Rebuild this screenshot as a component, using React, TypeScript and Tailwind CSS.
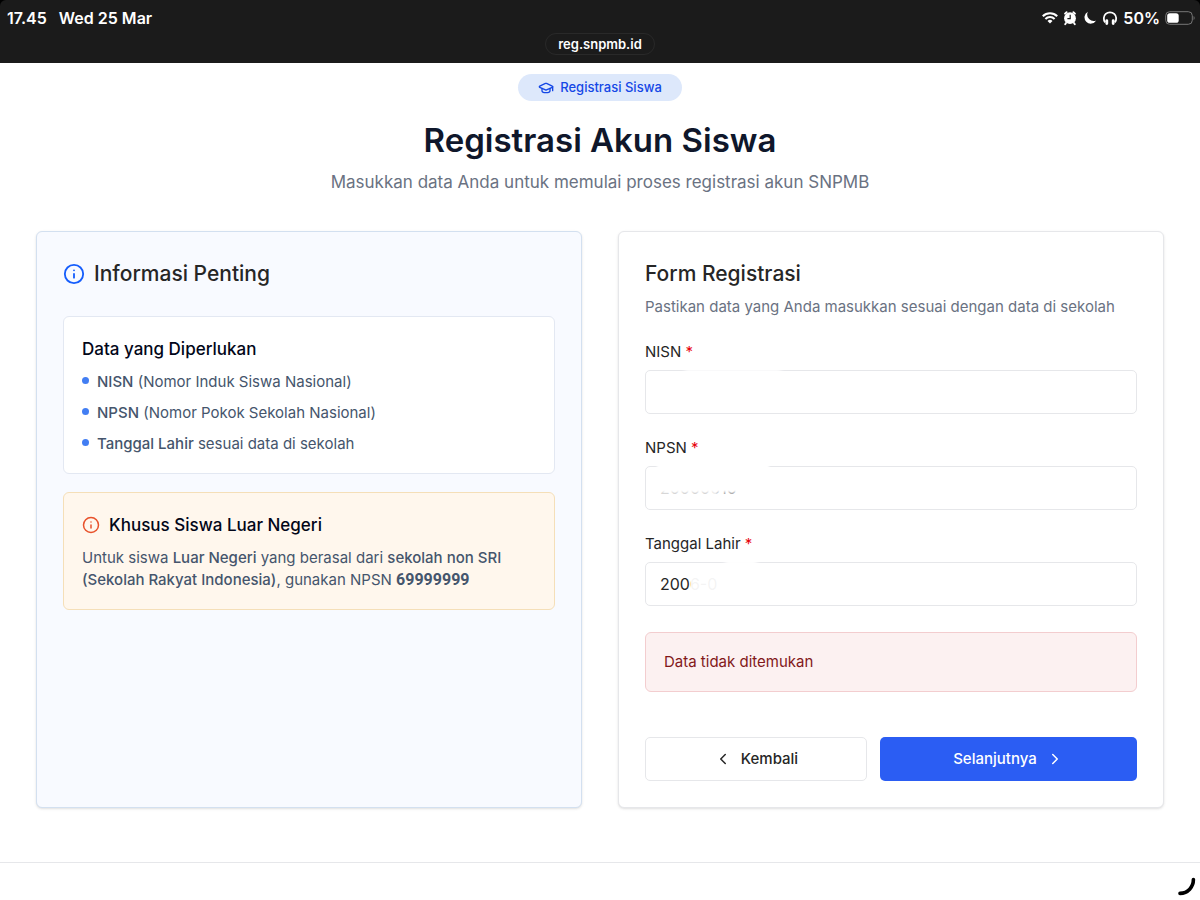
import { ReactNode } from "react";
import { ChevronLeft, ChevronRight, GraduationCap, Info } from "lucide-react";

const requirements = [
  { name: "NISN", detail: "(Nomor Induk Siswa Nasional)" },
  { name: "NPSN", detail: "(Nomor Pokok Sekolah Nasional)" },
  { name: "Tanggal Lahir", detail: "sesuai data di sekolah" },
];

const StatusIcons = () => (
  <div className="flex items-center gap-1">
    <svg className="w-4 h-4" viewBox="0 0 16 16" fill="none" stroke="currentColor" strokeWidth="2.1">
      <path d="M0.8 6.2a10.2 10.2 0 0 1 14.4 0" />
      <path d="M3.4 8.9a6.5 6.5 0 0 1 9.2 0" />
      <path d="M8 13.6 5.5 11a3.5 3.5 0 0 1 5 0z" fill="currentColor" stroke="none" />
    </svg>
    <svg className="w-4 h-4" viewBox="0 0 14 16">
      <circle cx="7" cy="8.2" r="5.9" fill="currentColor" />
      <path
        d="M2 3.6 3.6 2.2M12 3.6 10.4 2.2M3 13l-.8 1.2M11 13l.8 1.2"
        stroke="currentColor"
        strokeWidth="1.9"
        strokeLinecap="round"
      />
      <path d="M7.2 4.8v3.8H4.4" fill="none" stroke="#1b1b1b" strokeWidth="1.2" />
    </svg>
    <svg className="w-4 h-4" viewBox="0 0 14 16" fill="currentColor">
      <path d="M4.8 1.8A6.3 6.3 0 1 0 13.2 10.6 6.6 6.6 0 0 1 4.8 1.8z" />
    </svg>
    <svg className="w-4 h-4" viewBox="0 0 16 16" fill="none" stroke="currentColor">
      <path d="M3.2 12.4A6.2 6.2 0 1 1 12.8 12.4" strokeWidth="1.8" />
      <path d="M4.8 10.6v3M11.2 10.6v3" strokeWidth="2.8" strokeLinecap="round" />
    </svg>
  </div>
);

const StatusBar = () => (
  <div className="bg-black">
    <header className="h-[63px] rounded-t-md bg-[#1b1b1b] text-white font-semibold">
      <div className="flex justify-between items-center h-9 pl-[7px] pr-[5px] text-base">
        <div className="flex gap-3">
          <span>17.45</span>
          <span>Wed 25 Mar</span>
        </div>
        <div className="flex items-center gap-[5px]">
          <StatusIcons />
          <span>50%</span>
          <svg className="w-[30px] h-[14px]" viewBox="0 0 30 14" fill="none">
            <rect x="0.7" y="0.7" width="26.6" height="12.6" rx="4" stroke="#777" />
            <rect x="2.2" y="2.2" width="11.5" height="9.6" rx="2.6" fill="white" />
            <path d="M28.6 5v4c1.3-.5 1.3-3.5 0-4z" fill="#777" />
          </svg>
        </div>
      </div>
      <div className="flex justify-center">
        <span className="px-3 -mt-[3px] h-[22px] leading-5 rounded-full border border-[#292929] text-[13px]">
          reg.snpmb.id
        </span>
      </div>
    </header>
  </div>
);

type FieldProps = {
  id: string;
  label: string;
  value: string;
  children?: ReactNode;
};

const Field = ({ id, label, value, children }: FieldProps) => (
  <div>
    <label htmlFor={id} className="block text-[15px] leading-6 text-neutral-800">
      {label} <span className="text-red-600">*</span>
    </label>
    <div className="relative mt-[6px]">
      <input
        id={id}
        type="text"
        defaultValue={value}
        className="block w-full h-[44px] px-[14px] rounded-[5px] border border-[#e6e7ea] bg-white text-[16px] text-neutral-800 outline-none"
      />
      {/* soft white smear that hides what was typed */}
      {children}
    </div>
  </div>
);

const InfoCard = () => (
  <section className="rounded-md border border-[#d3e0f0] bg-[#f8faff] p-[26px] shadow-sm">
    <h2 className="flex items-center gap-[9px] h-8 text-[21px] font-medium text-neutral-800">
      <Info className="w-[22px] h-[22px] text-blue-600" strokeWidth={2} />
      Informasi Penting
    </h2>

    <div className="mt-[26px] rounded-md border border-[#e3e8f2] bg-white p-[18px]">
      <h3 className="text-[17px] leading-7 font-medium text-slate-950">Data yang Diperlukan</h3>
      <ul className="mt-2 space-y-[9px]">
        {requirements.map((item) => (
          <li key={item.name} className="flex items-start gap-2 text-[15px] leading-[22px] text-slate-600">
            <span className="w-[7px] h-[7px] mt-[6px] rounded-full bg-[#427ef3] shrink-0" />
            <span>
              <strong className="font-medium">{item.name}</strong> {item.detail}
            </span>
          </li>
        ))}
      </ul>
    </div>

    <div className="mt-[18px] rounded-md border border-[#f5dfb8] bg-[#fff7ed] p-[18px]">
      <h3 className="flex items-center gap-[9px] text-[17px] leading-7 font-medium text-slate-950">
        <Info className="w-[18px] h-[18px] text-[#e8512a]" strokeWidth={2} />
        Khusus Siswa Luar Negeri
      </h3>
      <p className="mt-2 text-[15px] leading-[22px] text-slate-600">
        Untuk siswa <strong className="font-medium">Luar Negeri</strong> yang berasal dari{" "}
        <strong className="font-medium">sekolah non SRI</strong>{" "}
        <strong className="font-medium">(Sekolah Rakyat Indonesia)</strong>, gunakan NPSN{" "}
        <strong className="font-bold text-[16px] font-['Roboto',sans-serif]">69999999</strong>
      </p>
    </div>
  </section>
);

const FormCard = () => (
  <section className="rounded-md border border-[#e6e7ea] bg-white p-[26px] shadow-sm">
    <h2 className="text-[21px] leading-8 font-medium text-neutral-800">Form Registrasi</h2>
    <p className="mt-[6px] text-[15px] leading-[22px] text-gray-500">
      Pastikan data yang Anda masukkan sesuai dengan data di sekolah
    </p>

    <form className="mt-[22px]" onSubmit={(e) => e.preventDefault()}>
      <div className="space-y-[22px]">
        <Field id="nisn" label="NISN" value="">
          <span className="absolute left-10 -top-px w-24 h-2 bg-white blur-[2px] pointer-events-none" />
        </Field>
        <Field id="npsn" label="NPSN" value="20000010">
          <span className="absolute left-3 -top-1 w-28 h-[30px] bg-white blur-[1px] pointer-events-none" />
          <span className="absolute left-3 top-4 w-[60px] h-5 bg-white/80 blur-[1px] pointer-events-none" />
          <span className="absolute left-[68px] top-4 w-8 h-5 bg-white/60 blur-[1px] pointer-events-none" />
        </Field>
        <Field id="tanggal-lahir" label="Tanggal Lahir" value="2006-0">
          <span className="absolute left-[46px] top-2 w-16 h-7 bg-white/95 pointer-events-none" />
          <span className="absolute left-20 -top-1 w-8 h-2 bg-white blur-[2px] pointer-events-none" />
        </Field>
      </div>

      <div
        role="alert"
        className="mt-[26px] p-[18px] rounded-md border border-[#f3cdcf] bg-[#fcf1f1] text-[15px] leading-[22px] text-red-900"
      >
        Data tidak ditemukan
      </div>

      <div className="mt-[45px] grid grid-cols-[221fr_256fr] gap-[13px] text-[15px] font-medium">
        <button
          type="button"
          className="flex items-center justify-center gap-[9px] h-[44px] rounded-[5px] border border-[#e6e7ea] bg-white text-neutral-800"
        >
          <ChevronLeft className="w-[18px] h-[18px]" />
          Kembali
        </button>
        <button
          type="submit"
          className="flex items-center justify-center gap-[9px] h-[44px] rounded-[5px] bg-[#2b5df3] text-white"
        >
          Selanjutnya
          <ChevronRight className="w-[18px] h-[18px]" />
        </button>
      </div>
    </form>
  </section>
);

const App = () => {
  return (
    <div className="relative min-h-screen flex flex-col bg-white font-['Inter',sans-serif]">
      <StatusBar />

      <main className="px-9 pt-[11px] pb-[54px]">
        <div className="flex flex-col items-center text-center">
          <span className="flex items-center gap-[6px] h-[27px] px-5 rounded-full bg-[#dde8fb] text-[13px] font-medium text-blue-700">
            <GraduationCap className="w-4 h-4" />
            Registrasi Siswa
          </span>
          <h1 className="mt-[19px] text-[33px] leading-10 font-semibold text-slate-900">Registrasi Akun Siswa</h1>
          <p className="mt-2 text-[17px] leading-7 text-gray-500">
            Masukkan data Anda untuk memulai proses registrasi akun SNPMB
          </p>
        </div>

        <div className="mt-[35px] grid grid-cols-2 gap-9">
          <InfoCard />
          <FormCard />
        </div>
      </main>

      <footer className="border-t border-[#e6e7ea]" />

      <svg className="absolute right-1 bottom-1 w-5 h-5" viewBox="0 0 20 20" fill="none">
        <path d="M17.4 3.6C17.4 11 12 17.2 4 17.4" stroke="black" strokeWidth="3.6" strokeLinecap="round" />
      </svg>
    </div>
  );
};

export default App;
